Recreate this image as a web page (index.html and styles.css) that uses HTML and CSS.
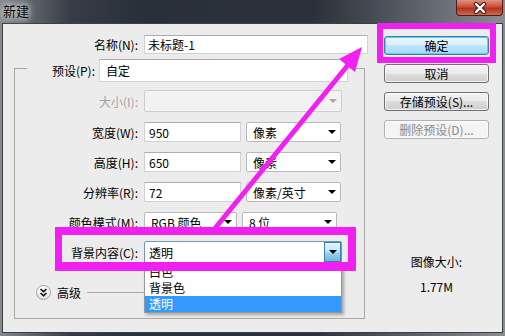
FILE: index.html
```html
<!DOCTYPE html>
<html lang="zh-CN">
<head>
  <meta charset="UTF-8">
  <title>新建</title>
  <link rel="stylesheet" href="styles.css">
</head>
<body>

<div class="window">
  <div class="titlebar">
    <span class="title">新建</span>
    <div class="close">
      <svg width="16" height="12" viewBox="0 0 16 12">
        <path d="M4 2 L12 10 M12 2 L4 10" stroke="#3b1a14" stroke-width="4.5" stroke-linecap="round"/>
        <path d="M4 2 L12 10 M12 2 L4 10" stroke="#fff" stroke-width="2.4" stroke-linecap="round"/>
      </svg>
    </div>
  </div>

  <div class="client">
    <div class="main">
      <div class="name-row">
        <label>名称(N):</label>
        <div class="field">未标题-1</div>
      </div>

      <div class="group">
        <div class="group-head">
          <label>预设(P):</label>
          <div class="field preset">自定</div>
        </div>

        <div class="row row-size">
          <label class="off">大小(I):</label>
          <div class="combo combo-wide combo-off"><span></span><i class="arrow"></i></div>
        </div>
        <div class="row">
          <label>宽度(W):</label>
          <div class="field num">950</div>
          <div class="combo unit"><span>像素</span><i class="arrow"></i></div>
        </div>
        <div class="row">
          <label>高度(H):</label>
          <div class="field num">650</div>
          <div class="combo unit"><span>像素</span><i class="arrow"></i></div>
        </div>
        <div class="row">
          <label>分辨率(R):</label>
          <div class="field num">72</div>
          <div class="combo unit"><span>像素/英寸</span><i class="arrow"></i></div>
        </div>
        <div class="row">
          <label>颜色模式(M):</label>
          <div class="combo mode"><span>RGB 颜色</span><i class="arrow"></i></div>
          <div class="combo unit"><span>8 位</span><i class="arrow"></i></div>
        </div>
        <div class="row row-bg">
          <label>背景内容(C):</label>
          <div class="combo combo-wide combo-open">
            <span>透明</span>
            <div class="drop-btn"><i class="arrow"></i></div>
            <ul class="drop-list">
              <li>白色</li>
              <li>背景色</li>
              <li class="sel">透明</li>
            </ul>
          </div>
        </div>

        <div class="advanced">
          <div class="adv-icon">
            <svg width="9" height="9" viewBox="0 0 9 9">
              <path d="M1.5 1 L4.5 3.6 L7.5 1 M1.5 5 L4.5 7.6 L7.5 5" fill="none" stroke="#111" stroke-width="1.6"/>
            </svg>
          </div>
          <span>高级</span>
          <div class="adv-line"></div>
        </div>
      </div>
    </div>

    <div class="side">
      <button class="btn btn-default">确定</button>
      <button class="btn">取消</button>
      <button class="btn">存储预设(S)...</button>
      <button class="btn" disabled>删除预设(D)...</button>
      <div class="info">
        <div>图像大小:</div>
        <div class="info-size">1.77M</div>
      </div>
    </div>
  </div>

  <!-- annotation marks drawn over the dialog -->
  <div class="mark mark-ok"></div>
  <div class="mark mark-bg"></div>
  <svg class="pointer" width="505" height="336" viewBox="0 0 505 336">
    <line x1="212" y1="232" x2="348" y2="65" stroke="#f020f0" stroke-width="5"/>
    <polygon points="362,47 355,72 339,59" fill="#f020f0"/>
  </svg>
</div>

</body>
</html>
```

FILE: styles.css
```css
* {
  box-sizing: border-box;
}
body {
  margin: 0;
  font-family: "Noto Sans CJK SC", "Liberation Sans", sans-serif;
  font-size: 12px;
  color: #000;
}
.window {
  position: relative;
  width: 505px;
  height: 336px;
  overflow: hidden;
  background: linear-gradient(to right, #878b90 0%, #5f656c 6%, #363d46 14%, #283039 28%, #2a313a 62%, #50565d 78%, #8a8e93 100%);
}
.titlebar {
  height: 23px;
  display: flex;
  justify-content: space-between;
  align-items: flex-start;
  padding-left: 3px;
}
.title {
  font-size: 13px;
  line-height: 21px;
  text-shadow: 0 0 6px #fff, 0 0 10px rgba(255,255,255,0.8);
}
.close {
  width: 47px;
  height: 16px;
  margin-right: 2px;
  display: flex;
  justify-content: center;
  align-items: center;
  border: 1px solid #4a1f18;
  border-top: none;
  border-radius: 0 0 4px 4px;
  background: linear-gradient(#e0907d, #c9503a 45%, #b3311c 55%, #cf6a50);
}
.client {
  margin: 0 2px;
  height: 310px;
  display: flex;
  background: #ececec;
  border: 1px solid #3c4045;
}
.main {
  width: 366px;
  padding-top: 11px;
}
label {
  text-align: right;
  white-space: nowrap;
}
.name-row {
  display: grid;
  grid-template-columns: 135px 224px;
  column-gap: 6px;
  align-items: center;
  height: 19px;
}
.field {
  height: 100%;
  background: #fff;
  border: 1px solid #d0d2d5;
  border-top-color: #abadb3;
  padding-left: 3px;
  display: flex;
  align-items: center;
}
.group {
  margin: 14px 0 0 11px;
  width: 351px;
  height: 251px;
  border: 1px solid #a9a9a9;
}
.group-head {
  display: flex;
  align-items: center;
  column-gap: 4px;
  margin: -10px 0 0 12px;
  width: 323px;
  height: 23px;
  background: #ececec;
}
.group-head label {
  width: 68px;
}
.preset {
  width: 249px;
  padding-left: 6px;
}
.row {
  display: flex;
  align-items: center;
  column-gap: 5px;
  height: 20px;
  margin-top: 10px;
}
.row label {
  width: 123px;
  margin-right: 1px;
}
.row-size {
  height: 22px;
  margin-top: 8px;
}
.row-bg {
  height: 22px;
  margin-top: 9px;
}
.off {
  color: #a3a3a3;
}
.num {
  width: 97px;
  padding-left: 4px;
}
.combo {
  height: 100%;
  display: flex;
  align-items: center;
  justify-content: space-between;
  background: #fff;
  border: 1px solid #b9b9b9;
  border-radius: 2px;
  padding: 0 4px 0 6px;
}
.unit {
  width: 95px;
}
.mode {
  width: 93px;
}
.combo-wide {
  width: 198px;
}
.combo-off {
  background: #f2f2f2;
  border-color: #cdcdcd;
}
.arrow {
  width: 0;
  height: 0;
  border-left: 4px solid transparent;
  border-right: 4px solid transparent;
  border-top: 4px solid #000;
}
.combo-off .arrow {
  border-top-color: #a8a8a8;
}
.combo-open {
  position: relative;
  border-color: #7296ba;
  padding: 0 0 0 4px;
}
.drop-btn {
  width: 17px;
  height: 100%;
  display: flex;
  justify-content: center;
  align-items: center;
  border: 1px solid #3c7fb1;
  background: linear-gradient(#e3f3fc, #c6e6f8 45%, #9cd2ef 55%, #6fb5de);
}
.drop-list {
  position: absolute;
  top: 21px;
  left: -1px;
  width: 198px;
  height: 50px;
  margin: 0;
  padding: 0;
  list-style: none;
  background: #fff;
  border: 1px solid #979797;
  box-shadow: 2px 2px 3px rgba(0,0,0,0.3);
}
.drop-list li {
  height: 16px;
  line-height: 16px;
  padding-left: 4px;
}
.drop-list .sel {
  background: #3399ff;
  color: #fff;
}
.advanced {
  display: flex;
  align-items: center;
  height: 16px;
  margin: 21px 0 0 21px;
}
.adv-icon {
  width: 15px;
  height: 15px;
  border-radius: 50%;
  border: 1px solid #a2a2a2;
  background: linear-gradient(#ffffff, #e2e2e2);
  display: flex;
  justify-content: center;
  align-items: center;
  margin-right: 6px;
}
.adv-line {
  flex: 1;
  height: 1px;
  margin: 0 40px 0 6px;
  background: #acacac;
}
.side {
  width: 105px;
  margin-left: 15px;
  padding-top: 12px;
  display: flex;
  flex-direction: column;
  row-gap: 9px;
}
.btn {
  height: 19px;
  padding: 0;
  font-family: inherit;
  font-size: 12px;
  color: #000;
  border: 1px solid #707070;
  border-radius: 3px;
  background: linear-gradient(#f2f2f2 0%, #ebebeb 50%, #dddddd 50%, #cfcfcf 100%);
  box-shadow: inset 0 0 0 1px rgba(255,255,255,0.7);
}
.btn-default {
  border-color: #3c7fb1;
  background: linear-gradient(#eaf6fd 0%, #d9f0fc 50%, #bee6fd 50%, #a7d9f5 100%);
  box-shadow: inset 0 0 0 1px #5fcdf2;
}
.btn:disabled {
  color: #8a8a8a;
  border-color: #adb2b5;
  background: #f4f4f4;
}
.info {
  margin-top: 106px;
  text-align: center;
  line-height: 16px;
}
.info-size {
  margin-top: 9px;
}
.mark {
  position: absolute;
  border: 6px solid #f020f0;
}
.mark-ok {
  left: 377px;
  top: 23px;
  width: 119px;
  height: 40px;
}
.mark-bg {
  left: 55px;
  top: 227px;
  width: 301px;
  height: 44px;
  border-width: 8px 8px 9px 7px;
}
.pointer {
  position: absolute;
  left: 0;
  top: 0;
  pointer-events: none;
}
```
